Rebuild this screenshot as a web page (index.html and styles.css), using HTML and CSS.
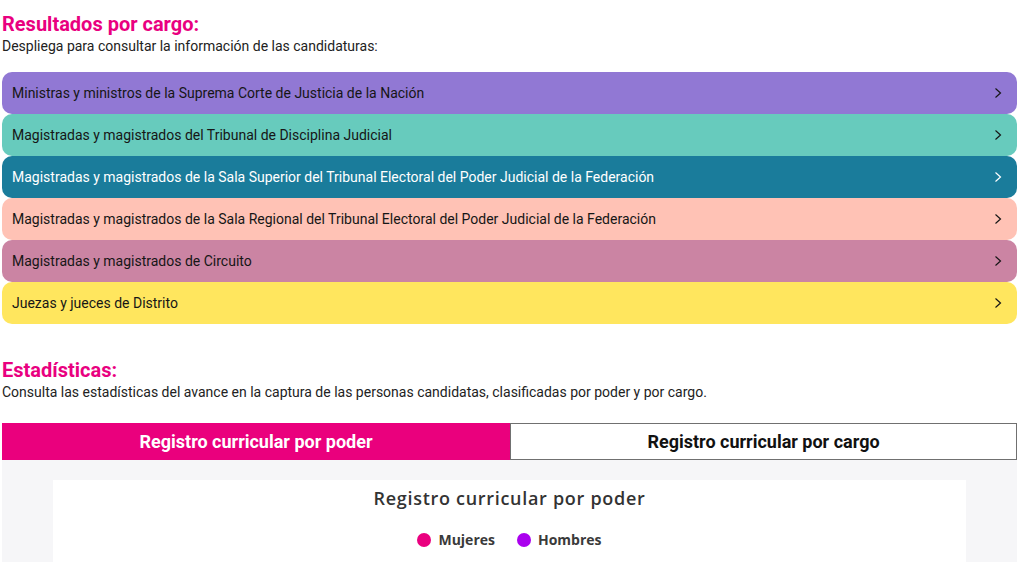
FILE: index.html
```html
<!DOCTYPE html>
<html lang="es">
<head>
<meta charset="utf-8">
<title>Resultados por cargo</title>
<link rel="stylesheet" href="styles.css">
</head>
<body>
<main class="page">
  <section class="block">
    <h2 class="block-title">Resultados por cargo:</h2>
    <p class="block-desc">Despliega para consultar la información de las candidaturas:</p>
    <div class="accordion">
      <button class="acc-item acc-scjn"><span>Ministras y ministros de la Suprema Corte de Justicia de la Nación</span><svg class="chev" viewBox="0 0 8 12" width="8" height="12"><polyline points="1.5,1.5 6.5,6 1.5,10.5"/></svg></button>
      <button class="acc-item acc-tdj"><span>Magistradas y magistrados del Tribunal de Disciplina Judicial</span><svg class="chev" viewBox="0 0 8 12" width="8" height="12"><polyline points="1.5,1.5 6.5,6 1.5,10.5"/></svg></button>
      <button class="acc-item acc-sup"><span>Magistradas y magistrados de la Sala Superior del Tribunal Electoral del Poder Judicial de la Federación</span><svg class="chev" viewBox="0 0 8 12" width="8" height="12"><polyline points="1.5,1.5 6.5,6 1.5,10.5"/></svg></button>
      <button class="acc-item acc-reg"><span>Magistradas y magistrados de la Sala Regional del Tribunal Electoral del Poder Judicial de la Federación</span><svg class="chev" viewBox="0 0 8 12" width="8" height="12"><polyline points="1.5,1.5 6.5,6 1.5,10.5"/></svg></button>
      <button class="acc-item acc-cir"><span>Magistradas y magistrados de Circuito</span><svg class="chev" viewBox="0 0 8 12" width="8" height="12"><polyline points="1.5,1.5 6.5,6 1.5,10.5"/></svg></button>
      <button class="acc-item acc-dis"><span>Juezas y jueces de Distrito</span><svg class="chev" viewBox="0 0 8 12" width="8" height="12"><polyline points="1.5,1.5 6.5,6 1.5,10.5"/></svg></button>
    </div>
  </section>

  <section class="block stats">
    <h2 class="block-title">Estadísticas:</h2>
    <p class="block-desc">Consulta las estadísticas del avance en la captura de las personas candidatas, clasificadas por poder y por cargo.</p>
    <div class="tabs">
      <button class="tab tab-active">Registro curricular por poder</button>
      <button class="tab">Registro curricular por cargo</button>
    </div>
    <div class="panel">
      <div class="chart-card">
        <h3 class="chart-title">Registro curricular por poder</h3>
        <ul class="legend">
          <li><span class="dot dot-m"></span>Mujeres</li>
          <li><span class="dot dot-h"></span>Hombres</li>
        </ul>
      </div>
    </div>
  </section>
</main>
</body>
</html>
```

FILE: styles.css
```css
* { box-sizing: border-box; }

html, body {
  margin: 0;
  padding: 0;
  background: #ffffff;
}

body {
  font-family: Roboto, "Liberation Sans", sans-serif;
  color: #222;
  overflow: hidden;
}

.page {
  margin: 0 7px 0 2px;
  padding-top: 12px;
}

.block-title {
  margin: 0;
  font-size: 20px;
  line-height: 24px;
  font-weight: 700;
  color: #e9007f;
}

.block-desc {
  margin: 0;
  font-size: 14px;
  line-height: 20px;
  color: #222;
}

.accordion {
  margin-top: 16px;
  display: flex;
  flex-direction: column;
}

.acc-item {
  display: flex;
  align-items: center;
  justify-content: space-between;
  height: 42px;
  padding: 0 15px 0 10px;
  border: none;
  border-radius: 10px;
  font-family: inherit;
  font-size: 14px;
  color: #161616;
  text-align: left;
  cursor: pointer;
}

.chev {
  fill: none;
  stroke: currentColor;
  stroke-width: 1.2;
}

.acc-scjn { background: #9178d4; }
.acc-tdj  { background: #67cbbd; }
.acc-sup  { background: #1a7c9b; color: #ffffff; }
.acc-reg  { background: #ffc2b5; }
.acc-cir  { background: #cb84a3; }
.acc-dis  { background: #ffe65e; }

.stats {
  margin-top: 34px;
}

.tabs {
  margin-top: 21px;
  display: grid;
  grid-template-columns: 508px 1fr;
  height: 37px;
}

.tab {
  border: 1px solid #707070;
  background: #ffffff;
  font-family: inherit;
  font-size: 18px;
  font-weight: 700;
  color: #111;
  cursor: pointer;
}

.tab-active {
  background: #ea007d;
  border-color: #ea007d;
  color: #ffffff;
}

.panel {
  background: #f6f6f8;
  padding: 20px 51px 0 51px;
  height: 102px;
}

.chart-card {
  background: #ffffff;
  height: 100%;
  padding-top: 6px;
  text-align: center;
  color: #333;
}

.chart-title {
  margin: 0;
  font-family: "Open Sans", sans-serif;
  font-size: 18px;
  line-height: 24px;
  font-weight: 600;
  letter-spacing: 0.7px;
  color: #333;
}

.legend {
  list-style: none;
  margin: 20px 0 0;
  padding: 0;
  display: flex;
  justify-content: center;
  gap: 22px;
  font-family: "Open Sans", sans-serif;
  font-size: 14px;
  font-weight: 700;
  color: #3a3a3a;
}

.legend li {
  display: flex;
  align-items: center;
  gap: 7px;
}

.dot {
  width: 14px;
  height: 14px;
  border-radius: 50%;
  display: inline-block;
}

.dot-m { background: #ea007f; }
.dot-h { background: #aa00ee; }
```
